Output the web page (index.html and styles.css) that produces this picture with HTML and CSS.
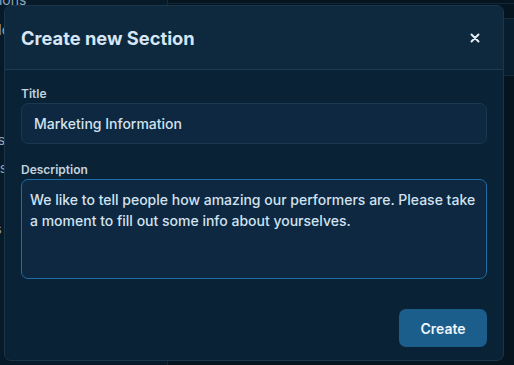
FILE: index.html
```html
<!DOCTYPE html>
<html lang="en">
<head>
    <meta charset="UTF-8">
    <meta name="viewport" content="width=device-width, initial-scale=1.0">
    <title>Create new Section</title>
    <link rel="stylesheet" href="styles.css">
</head>
<body>
    <div class="app">
        <aside class="sidebar">
            <div class="nav-item nav-top">Integrations</div>
            <div class="nav-item" style="margin-top: 14px">Schedule</div>
            <div class="nav-item" style="margin-top: 94px">Sections</div>
            <div class="nav-item" style="margin-top: 12px">Contacts</div>
            <div class="nav-item" style="margin-top: 45px">Settings</div>
            <div class="nav-item" style="margin-top: 98px">Data</div>
        </aside>
        <main class="main">
            <div class="topbar"></div>
            <div class="panel"></div>
        </main>
    </div>

    <div class="modal">
        <div class="modal-header">
            <h2 class="modal-title">Create new Section</h2>
            <button class="modal-close" aria-label="Close">
                <svg width="10" height="10" viewBox="0 0 10 10">
                    <path d="M1.5 1.5 L8.5 8.5 M8.5 1.5 L1.5 8.5" stroke="currentColor" stroke-width="2" stroke-linecap="round"/>
                </svg>
            </button>
        </div>
        <div class="modal-body">
            <label class="field-label">Title</label>
            <div class="text-input">Marketing Information</div>

            <label class="field-label">Description</label>
            <div class="text-area">We like to tell people how amazing our performers are. Please take a moment to fill out some info about yourselves.</div>

            <div class="modal-footer">
                <button class="btn-primary">Create</button>
            </div>
        </div>
    </div>
</body>
</html>
```

FILE: styles.css
```css
* {
    box-sizing: border-box;
}

body {
    margin: 0;
    background: #05141f;
    font-family: Inter, "Noto Sans", sans-serif;
    color: #d3e3f1;
    overflow: hidden;
    height: 365px;
}

.app {
    display: flex;
    height: 365px;
}

.sidebar {
    width: 168px;
    border-right: 1px solid #15293a;
    background: #061a29;
    overflow: hidden;
}

.nav-item {
    font-size: 14px;
    color: #8ea6bb;
    white-space: nowrap;
    margin-left: -52px;
    line-height: 16px;
}

.nav-top {
    margin-top: -8px;
}

.main {
    flex: 1;
    display: flex;
    flex-direction: column;
}

.topbar {
    height: 4px;
    border-bottom: 1px solid #12283a;
}

.panel {
    margin: 14px 0 0 330px;
    height: 58px;
    background: #081d2d;
    border-top: 1px solid #14293a;
    border-bottom: 1px solid #14293a;
}

.modal {
    position: absolute;
    left: 4px;
    top: 5px;
    width: 500px;
    height: 356px;
    background: #0a2236;
    border: 1px solid #1b3549;
    border-radius: 7px;
    overflow: hidden;
    display: flex;
    flex-direction: column;
}

.modal-header {
    height: 64px;
    flex-shrink: 0;
    background: #0e283d;
    border-bottom: 1px solid #1c3a50;
    display: flex;
    align-items: center;
    justify-content: space-between;
    padding: 0 23px 0 16px;
}

.modal-title {
    margin: 0;
    font-size: 18.3px;
    font-weight: 700;
    color: #d6e6f5;
}

.modal-close {
    background: none;
    border: none;
    color: #e3eef8;
    padding: 0;
    width: 10px;
    height: 10px;
    cursor: pointer;
    display: flex;
}

.modal-body {
    flex: 1;
    padding: 16px 16px 12px;
    display: flex;
    flex-direction: column;
}

.field-label {
    font-size: 12px;
    font-weight: 600;
    color: #c3d2de;
    line-height: 15px;
    margin-bottom: 2px;
}

.text-input {
    height: 41px;
    flex-shrink: 0;
    border: 1px solid #1a3850;
    border-radius: 7px;
    background: #0d2840;
    font-size: 14px;
    font-weight: 500;
    color: #d2e2f0;
    padding: 0 12px;
    display: flex;
    align-items: center;
    margin-bottom: 18px;
}

.text-area {
    height: 100px;
    flex-shrink: 0;
    border: 1px solid #1f6ba3;
    border-radius: 7px;
    background: #0d2840;
    font-size: 14px;
    font-weight: 500;
    line-height: 21px;
    color: #d2e2f0;
    padding: 9px 2px 9px 8px;
}

.modal-footer {
    display: flex;
    justify-content: flex-end;
    margin-top: 30px;
}

.btn-primary {
    background: #1b5e8c;
    color: #eef5fb;
    border: none;
    border-radius: 7px;
    width: 88px;
    height: 38px;
    font-family: inherit;
    font-size: 14px;
    font-weight: 600;
    cursor: pointer;
}
```
